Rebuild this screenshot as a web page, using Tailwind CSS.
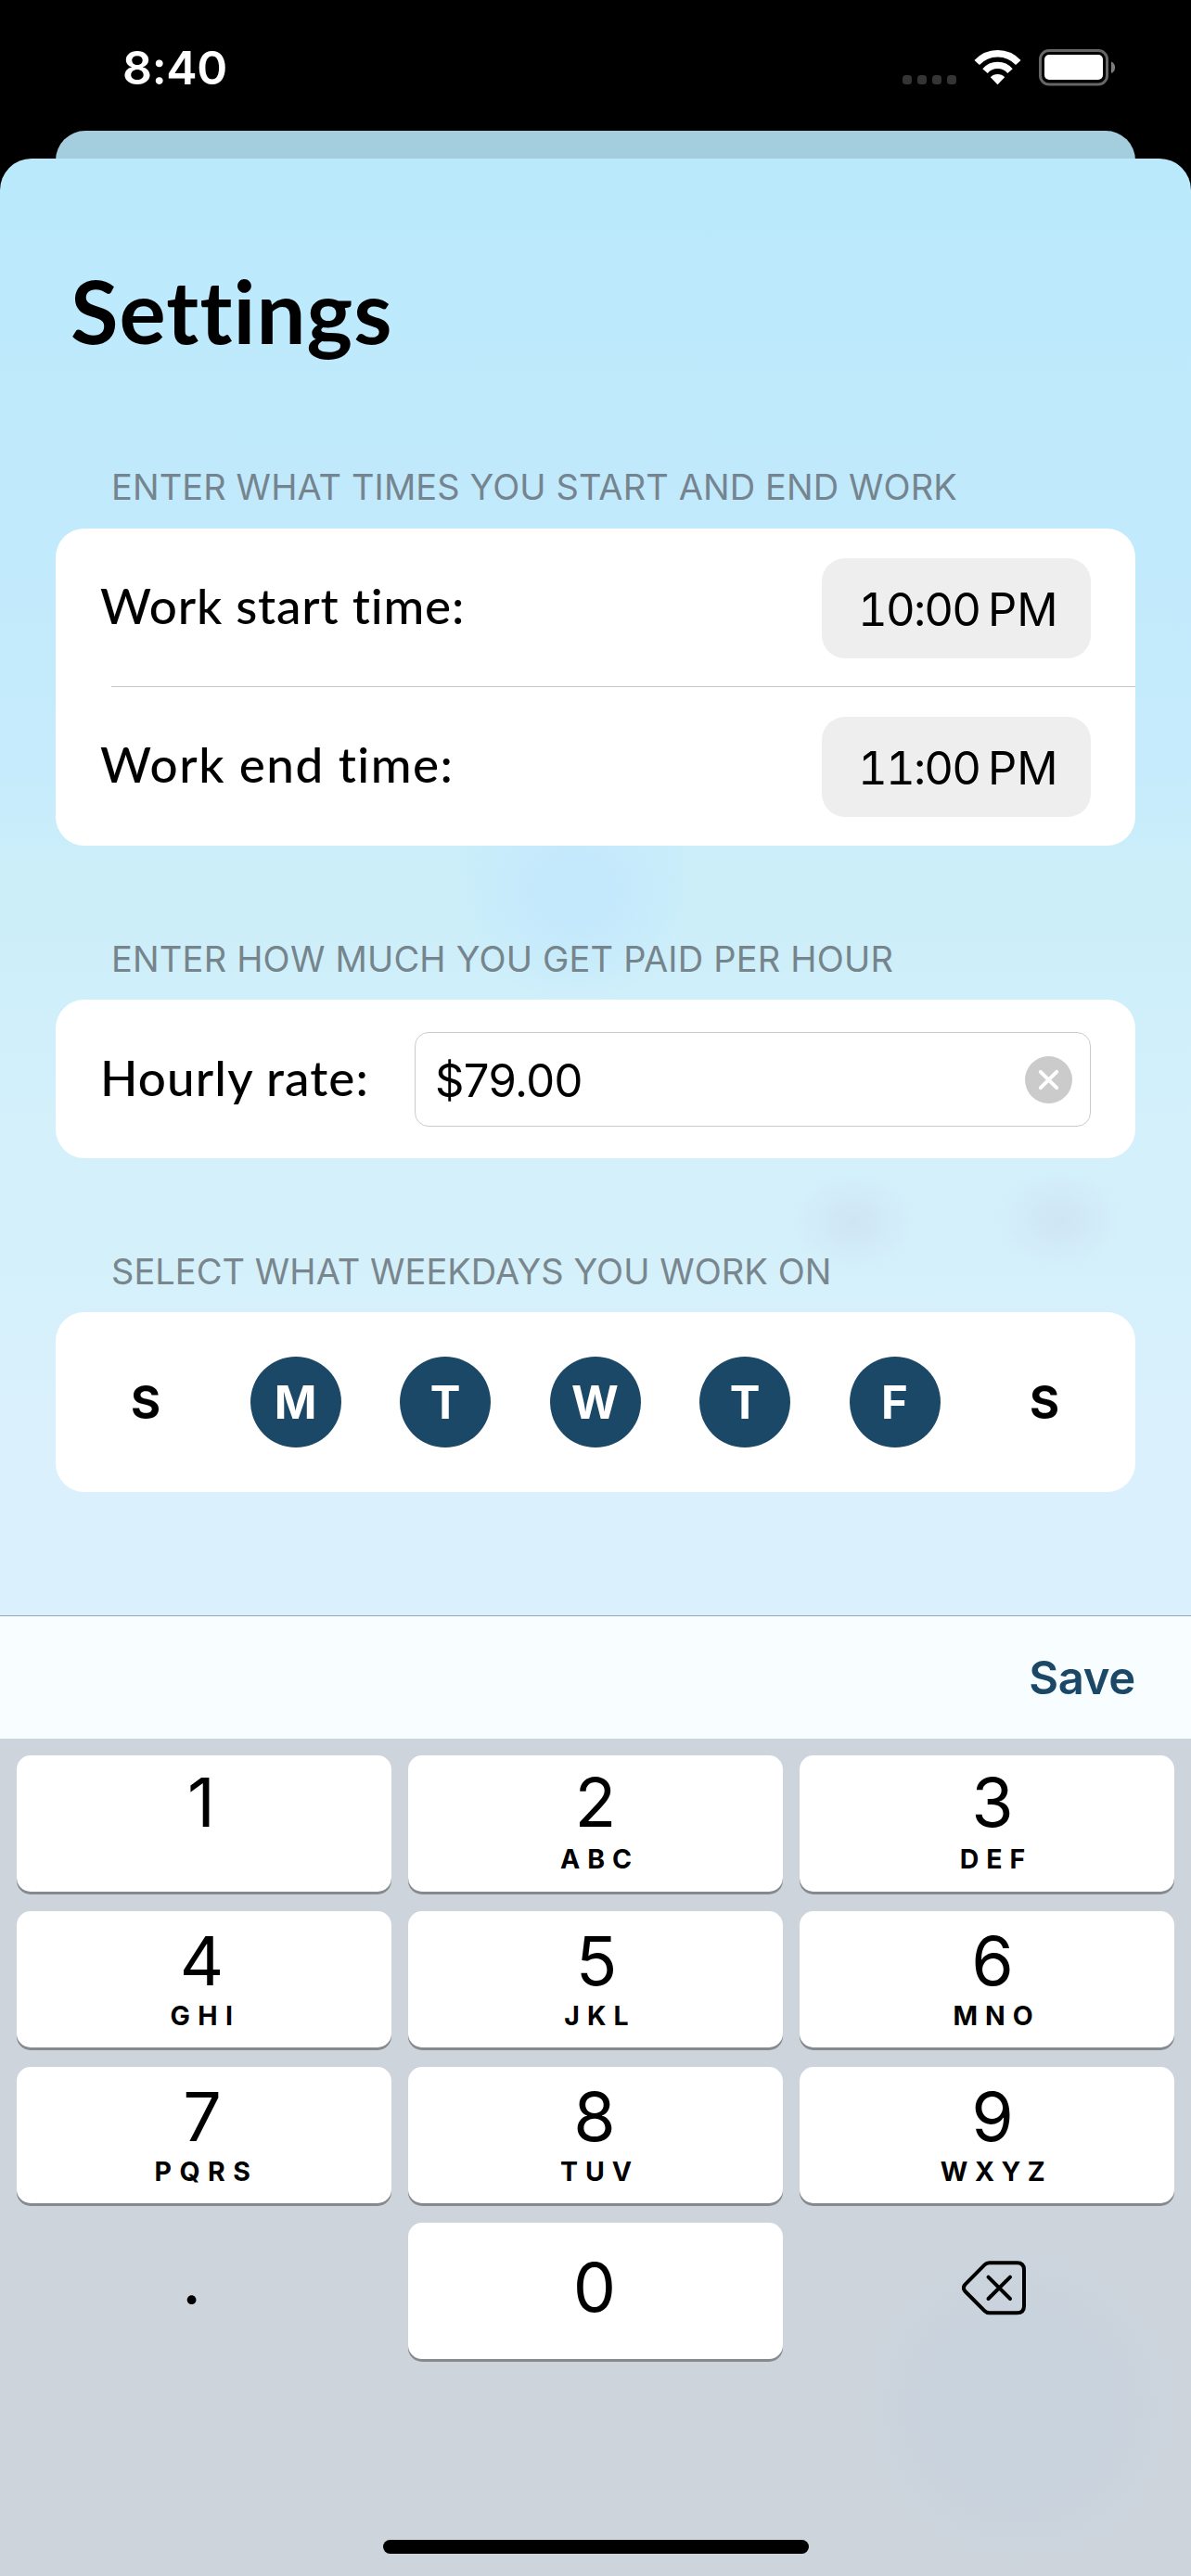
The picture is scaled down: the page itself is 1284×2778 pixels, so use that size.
<!DOCTYPE html>
<html lang="en">
<head>
<meta charset="utf-8">
<title>Settings</title>
<script src="https://cdn.jsdelivr.net/npm/@tailwindcss/browser@4"></script>
</head>
<body class="bg-black">
<div class="flex h-[2778px] w-[1284px] flex-col overflow-hidden bg-black font-['Inter',sans-serif] text-black">

  <!-- Status bar -->
  <header class="flex h-[141px] shrink-0 items-start justify-between pt-[48px] pr-[82px] pl-[132px]">
    <span class="text-[50px] leading-[50px] font-semibold tracking-[-0.3px] text-white">8:40</span>
    <svg class="mt-[6px] h-[39px] w-[229px]" viewBox="973 54 229 39" fill="none" overflow="visible">
      <g fill="#343434">
        <rect x="973" y="81" width="10" height="10" rx="3.5"/>
        <rect x="989" y="81" width="10" height="10" rx="3.5"/>
        <rect x="1005" y="81" width="10" height="10" rx="3.5"/>
        <rect x="1021" y="81" width="10" height="10" rx="3.5"/>
      </g>
      <path d="M1053.2 67.6A30.2 30.2 0 0 1 1097.8 67.6" stroke="#fff" stroke-width="7.4"/>
      <path d="M1062 76.6A17.8 17.8 0 0 1 1089 76.6" stroke="#fff" stroke-width="7.2"/>
      <path d="M1067.8 83.2A11 11 0 0 1 1083.2 83.2L1075.5 91.2Z" fill="#fff"/>
      <rect x="1121.5" y="54.5" width="72" height="36.5" rx="9.5" stroke="#666" stroke-width="3"/>
      <rect x="1126" y="59" width="63" height="27" rx="5" fill="#fff"/>
      <path d="M1198 66.5C1203.500 68.500 1203.500 77 1198 79Z" fill="#7d7d7d"/>
    </svg>
  </header>

  <!-- Presenting screen behind the sheet -->
  <div class="mx-[60px] h-[80px] shrink-0 rounded-t-[32px] bg-[#a4cddd]"></div>

  <!-- Sheet -->
  <main class="relative -mt-[50px] flex h-[1571px] shrink-0 flex-col overflow-hidden rounded-t-[34px] bg-linear-to-b from-[#bae9fc] from-0% via-[#c5ebfc] via-40% to-[#dbf0fe] to-100% px-[60px]">
    <div class="absolute inset-0 bg-[radial-gradient(ellipse_130px_120px_at_620px_790px,#c4e9fc_30%,transparent),radial-gradient(ellipse_70px_55px_at_920px_1147px,#cfe5f4_0%,transparent),radial-gradient(ellipse_70px_55px_at_1142px_1145px,#cfe5f4_0%,transparent),linear-gradient(to_bottom,transparent_42%,#cbeef9_49%,#d3f0fb_66%,#d4f1fb_76%,#daf0fd_86%)]"></div>

    <div class="relative flex flex-col">
      <h1 class="mt-[114px] ml-[16px] font-['Lato',sans-serif] text-[94px] leading-[100px] font-bold tracking-[1.1px]">Settings</h1>

      <h2 class="mt-[120px] ml-[60px] text-[38px] leading-[40px] tracking-[0.1px] text-[#76848f]">ENTER WHAT TIMES YOU START AND END WORK</h2>
      <section class="mt-[25px] flex h-[342px] flex-col rounded-[31px] bg-white">
        <div class="flex h-[170px] items-center justify-between pr-[48px] pl-[48px]">
          <span class="pb-[4px] font-['Lato',sans-serif] text-[53px] leading-[60px] font-medium tracking-[0.8px]">Work start time:</span>
          <button class="mt-[2px] flex h-[108px] w-[290px] items-center gap-[11px] rounded-[25px] bg-[#eeeeef] pt-[4px] pl-[39px] text-[49px] leading-[60px]"><span class="w-[129px] tracking-[-1.8px] whitespace-nowrap tabular-nums">10:00</span><span>PM</span></button>
        </div>
        <div class="ml-[60px] h-px bg-[#c6c6c8]"></div>
        <div class="flex h-[171px] items-center justify-between pr-[48px] pl-[48px]">
          <span class="pb-[5px] font-['Lato',sans-serif] text-[53px] leading-[60px] font-medium tracking-[1.5px]">Work end time:</span>
          <button class="mt-[1px] flex h-[108px] w-[290px] items-center gap-[11px] rounded-[25px] bg-[#eeeeef] pt-[4px] pl-[39px] text-[49px] leading-[60px]"><span class="w-[129px] tracking-[-1.8px] whitespace-nowrap tabular-nums">11:00</span><span>PM</span></button>
        </div>
      </section>

      <h2 class="mt-[102px] ml-[60px] text-[38px] leading-[40px] tracking-[0.2px] text-[#76848c]">ENTER HOW MUCH YOU GET PAID PER HOUR</h2>
      <section class="mt-[24px] flex h-[171px] items-center justify-between rounded-[31px] bg-white pr-[48px] pl-[48px]">
        <span class="pb-[4px] font-['Lato',sans-serif] text-[53px] leading-[60px] font-medium tracking-[1.1px]">Hourly rate:</span>
        <div class="flex h-[102px] w-[729px] items-center justify-between rounded-[15px] border border-[#cbcbcd] pr-[19px] pl-[21px]">
          <span class="pt-[4px] text-[49px] leading-[60px] tracking-[-0.6px]">$79.00</span>
          <svg class="mt-[2px] size-[51px]" viewBox="0 0 51 51" fill="none">
            <circle cx="25.500" cy="25.500" r="25.500" fill="#cbcbcb"/>
            <path d="M16.800 16.800L34.200 34.200M34.200 16.800L16.800 34.200" stroke="#fff" stroke-width="4" stroke-linecap="round"/>
          </svg>
        </div>
      </section>

      <h2 class="mt-[102px] ml-[60px] text-[38px] leading-[40px] tracking-[0.05px] text-[#7a868d]">SELECT WHAT WEEKDAYS YOU WORK ON</h2>
      <section class="mt-[24px] flex h-[194px] items-center justify-between rounded-[31px] bg-white pr-[49px] pl-[48px] text-[49px] font-bold text-white">
        <span class="flex size-[98px] items-center justify-center pt-[2px] text-black">S</span>
        <span class="flex size-[98px] items-center justify-center rounded-full bg-[#1b4866] pt-[2px]">M</span>
        <span class="flex size-[98px] items-center justify-center rounded-full bg-[#1b4866] pt-[2px]">T</span>
        <span class="flex size-[98px] items-center justify-center rounded-full bg-[#1b4866] pt-[2px]">W</span>
        <span class="flex size-[98px] items-center justify-center rounded-full bg-[#1b4866] pt-[2px]">T</span>
        <span class="flex size-[98px] items-center justify-center rounded-full bg-[#1b4866] pt-[2px]">F</span>
        <span class="flex size-[98px] items-center justify-center pt-[2px] text-black">S</span>
      </section>
    </div>
  </main>

  <!-- Keyboard accessory bar -->
  <div class="flex h-[133px] shrink-0 items-center justify-end border-t border-[#90a9bb] bg-[#f8feff] pr-[60px]">
    <button class="pt-[1px] text-[49px] leading-[60px] font-semibold tracking-[-0.3px] text-[#1b4866]">Save</button>
  </div>

  <!-- Number pad -->
  <div class="flex flex-1 flex-col items-center justify-between bg-[#cdd4dc] bg-[radial-gradient(circle_at_1100px_720px,#c9d3dd_0,#c9d3dd_90px,transparent_190px)] px-[18px] pt-[18px] pb-[24px]">
    <div class="grid w-full auto-rows-[147px] grid-cols-3 gap-x-[18px] gap-y-[21px]">
      <div class="flex flex-col items-center rounded-[15px] bg-white pt-[11px] pr-[6px] shadow-[0_3px_0_#868a8f]"><span class="text-[73.500px] leading-[80px]">1</span></div>
      <div class="flex flex-col items-center rounded-[15px] bg-white pt-[11px] shadow-[0_3px_0_#868a8f]"><span class="text-[73.500px] leading-[80px]">2</span><span class="mt-[6px] pl-[9px] text-[28.500px] leading-[30px] font-bold tracking-[8px]">ABC</span></div>
      <div class="flex flex-col items-center rounded-[15px] bg-white pt-[11px] pl-[12px] shadow-[0_3px_0_#868a8f]"><span class="text-[73.500px] leading-[80px]">3</span><span class="mt-[6px] pl-[8px] text-[28.500px] leading-[30px] font-bold tracking-[8px]">DEF</span></div>

      <div class="flex flex-col items-center rounded-[15px] bg-white pt-[14px] pr-[5px] shadow-[0_3px_0_#868a8f]"><span class="text-[73.500px] leading-[80px]">4</span><span class="mt-[4px] pl-[8px] text-[28.500px] leading-[30px] font-bold tracking-[8.500px]">GHI</span></div>
      <div class="flex flex-col items-center rounded-[15px] bg-white pt-[14px] pl-[2px] shadow-[0_3px_0_#868a8f]"><span class="text-[73.500px] leading-[80px]">5</span><span class="mt-[4px] pl-[8px] text-[28.500px] leading-[30px] font-bold tracking-[8px]">JKL</span></div>
      <div class="flex flex-col items-center rounded-[15px] bg-white pt-[14px] pl-[12px] shadow-[0_3px_0_#868a8f]"><span class="text-[73.500px] leading-[80px]">6</span><span class="mt-[4px] pl-[9px] text-[28.500px] leading-[30px] font-bold tracking-[8px]">MNO</span></div>

      <div class="flex flex-col items-center rounded-[15px] bg-white pt-[14px] pr-[4px] shadow-[0_3px_0_#868a8f]"><span class="text-[73.500px] leading-[80px]">7</span><span class="mt-[4px] pl-[9px] text-[28.500px] leading-[30px] font-bold tracking-[8.500px]">PQRS</span></div>
      <div class="flex flex-col items-center rounded-[15px] bg-white pt-[14px] pr-[2px] shadow-[0_3px_0_#868a8f]"><span class="text-[73.500px] leading-[80px]">8</span><span class="mt-[4px] pl-[11px] text-[28.500px] leading-[30px] font-bold tracking-[8px]">TUV</span></div>
      <div class="flex flex-col items-center rounded-[15px] bg-white pt-[14px] pl-[12px] shadow-[0_3px_0_#868a8f]"><span class="text-[73.500px] leading-[80px]">9</span><span class="mt-[4px] pl-[8px] text-[28.500px] leading-[30px] font-bold tracking-[7.500px]">WXYZ</span></div>

      <div class="flex flex-col items-center pt-[22px] pr-[27px]"><span class="text-[73.500px] leading-[80px]">.</span></div>
      <div class="flex flex-col items-center rounded-[15px] bg-white pt-[30px] pr-[2px] shadow-[0_3px_0_#868a8f]"><span class="text-[73.500px] leading-[80px]">0</span></div>
      <div class="flex flex-col items-center pt-[41px] pl-[15px]">
        <svg class="h-[60px] w-[70px]" viewBox="0 0 70 60" fill="none" stroke="#000" stroke-width="4" stroke-linecap="round" stroke-linejoin="round">
          <path d="M29.500 2.300H59.500Q67 2.300 67 9.800V48.800Q67 56.300 59.500 56.300H29.500Q26.500 56.300 24.500 54.200L3.500 33Q0.300 29.300 3.500 25.600L24.500 4.400Q26.500 2.300 29.500 2.300Z"/>
          <path d="M28.500 17.600L52 41M52 17.600L28.500 41"/>
        </svg>
      </div>
    </div>
    <div class="h-[15px] w-[459px] rounded-full bg-black"></div>
  </div>
</div>
</body>
</html>
